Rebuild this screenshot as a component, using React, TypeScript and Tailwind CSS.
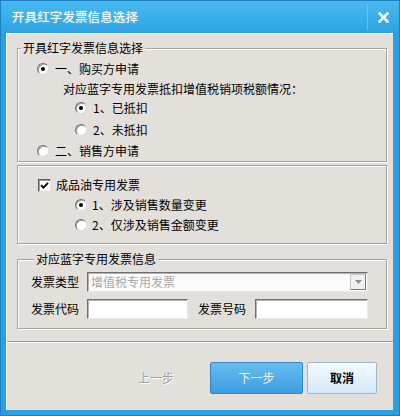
import React from "react";

const Radio = ({ checked }: { checked?: boolean }) => (
  <span className="inline-flex shrink-0 w-[12px] h-[12px] rounded-full bg-white border border-[#6f6f6f] border-b-[#dcdcdc] border-r-[#dcdcdc] items-center justify-center shadow-[inset_1px_1px_0_#a8a8a8]">
    {checked && <span className="w-[4px] h-[4px] rounded-full bg-black" />}
  </span>
);

const Checkbox = ({ checked }: { checked?: boolean }) => (
  <span className="inline-flex shrink-0 w-[13px] h-[13px] bg-white border border-[#5a5a5a] border-b-[#e0e0e0] border-r-[#e0e0e0] items-center justify-center shadow-[inset_1px_1px_0_#a0a0a0]">
    {checked && (
      <svg width="9" height="9" viewBox="0 0 9 9">
        <path d="M1 4.2 L3.4 6.6 L8 1.8" stroke="#000" strokeWidth="1.8" fill="none" />
      </svg>
    )}
  </span>
);

const Row = ({ h, pl, children, className = "" }: { h: number; pl: number; children: React.ReactNode; className?: string }) => (
  <div className={`flex items-center ${className}`} style={{ height: h, paddingLeft: pl }}>
    {children}
  </div>
);

const Legend = ({ children }: { children: React.ReactNode }) => (
  <legend className="ml-[3px] px-[2px] bg-[#e3dfdb] text-[12px] leading-[14px] text-black">{children}</legend>
);

const Input = ({ w, children }: { w: number; children?: React.ReactNode }) => (
  <div
    className="h-[20px] bg-white border border-[#6e6e6e] border-b-[#e8e8e8] border-r-[#e8e8e8] shadow-[inset_1px_1px_0_#b4b4b4] flex items-center"
    style={{ width: w }}
  >
    {children}
  </div>
);

export default function App() {
  return (
    <div className="w-[400px] h-[416px] flex flex-col bg-[#2b9fdf] border border-[#1d80c4] font-['Noto_Sans_CJK_SC','Noto_Sans',sans-serif] overflow-hidden">
      {/* Title bar */}
      <div className="h-[32px] shrink-0 flex items-center bg-gradient-to-b from-[#48baf0] to-[#2da3e2]">
        <span className="pl-[11px] text-[12.5px] tracking-[0.1px] text-white [text-shadow:0_0_2px_rgba(255,255,255,0.5)]">
          开具红字发票信息选择
        </span>
        <div className="flex-1" />
        <div className="w-px h-[26px] bg-[#7cc9ef] opacity-70" />
        <div className="w-[31px] flex items-center justify-center">
          <svg width="11" height="11" viewBox="0 0 11 11">
            <path d="M1.5 1.5 L9.5 9.5 M9.5 1.5 L1.5 9.5" stroke="#fff" strokeWidth="2.6" strokeLinecap="square" />
          </svg>
        </div>
      </div>

      {/* Client area */}
      <div className="flex-1 ml-[5px] mr-[6px] mb-[5px] bg-[#e3dfdb] border-t border-l border-white flex flex-col text-[12px] text-black">
        <div className="pl-[10px] pr-[6px] pt-[7px] flex flex-col">
          {/* Group 1 */}
          <fieldset className="border border-[#a7a39f] shadow-[inset_1px_1px_0_#fff,1px_1px_0_#fff] pb-0">
            <Legend>开具红字发票信息选择</Legend>
            <Row h={22} pl={19} className="mt-[3px]">
              <Radio checked />
              <span className="ml-[6px]">一、购买方申请</span>
            </Row>
            <Row h={18} pl={45}>
              <span>对应蓝字专用发票抵扣增值税销项税额情况：</span>
            </Row>
            <Row h={20} pl={57}>
              <Radio checked />
              <span className="ml-[6px]">1、已抵扣</span>
            </Row>
            <Row h={22} pl={57} className="mt-[1px]">
              <Radio />
              <span className="ml-[6px]">2、未抵扣</span>
            </Row>
            <Row h={20} pl={19}>
              <Radio />
              <span className="ml-[6px]">二、销售方申请</span>
            </Row>
          </fieldset>

          {/* Box 2 */}
          <div className="mt-[3px] border border-[#a7a39f] shadow-[inset_1px_1px_0_#fff,1px_1px_0_#fff] pt-[9px] pb-[8px]">
            <Row h={20} pl={20}>
              <Checkbox checked />
              <span className="ml-[5px]">成品油专用发票</span>
            </Row>
            <Row h={20} pl={57}>
              <Radio checked />
              <span className="ml-[5px]">1、涉及销售数量变更</span>
            </Row>
            <Row h={20} pl={57}>
              <Radio />
              <span className="ml-[5px]">2、仅涉及销售金额变更</span>
            </Row>
          </div>

          {/* Group 3 */}
          <fieldset className="mt-[8px] border border-[#a7a39f] shadow-[inset_1px_1px_0_#fff,1px_1px_0_#fff] pl-[13px] pr-[18px] pt-[6px] pb-[9px]">
            <Legend>对应蓝字专用发票信息</Legend>
            <div className="flex items-center h-[20px]">
              <span className="w-[56px]">发票类型</span>
              <div className="flex-1 h-[20px] bg-[#fbfbfb] border border-[#6e6e6e] border-b-[#e8e8e8] border-r-[#e8e8e8] shadow-[inset_1px_1px_0_#b4b4b4] flex items-center">
                <span className="pl-[3px] text-[#a9a9a9]">增值税专用发票</span>
                <div className="flex-1" />
                <div className="w-[16px] h-[16px] mr-[1px] bg-[#f0f0f0] border border-[#c8c8c8] border-r-[#7a7a7a] border-b-[#7a7a7a] flex items-center justify-center">
                  <svg width="7" height="4" viewBox="0 0 7 4">
                    <path d="M0 0 L7 0 L3.5 4 Z" fill="#8c8c8c" />
                  </svg>
                </div>
              </div>
            </div>
            <div className="flex items-center h-[20px] mt-[7px]">
              <span className="w-[56px]">发票代码</span>
              <Input w={101} />
              <span className="ml-[10px] w-[57px]">发票号码</span>
              <div className="flex-1">
                <Input w={113} />
              </div>
            </div>
          </fieldset>
        </div>

        {/* Separator */}
        <div className="mt-[12px] h-px bg-[#9e9a96] border-b border-white box-content" />

        {/* Buttons */}
        <div className="flex items-center justify-end pr-[16px] pt-[19px]">
          <div className="w-[92px] h-[32px] flex items-center justify-center text-[#a3a3a3] [text-shadow:1px_1px_0_#fff]">
            上一步
          </div>
          <div className="ml-[8px] w-[93px] h-[32px] rounded-[2px] border border-[#3585c2] bg-gradient-to-b from-[#67bdf0] to-[#3c9de0] flex items-center justify-center text-[#e6f6ff]">
            下一步
          </div>
          <div className="ml-[4px] w-[70px] h-[32px] rounded-[2px] border border-[#9fb9cc] bg-gradient-to-b from-[#f4faff] to-[#d4e9f8] flex items-center justify-center text-black font-bold">
            取消
          </div>
        </div>
      </div>
    </div>
  );
}
